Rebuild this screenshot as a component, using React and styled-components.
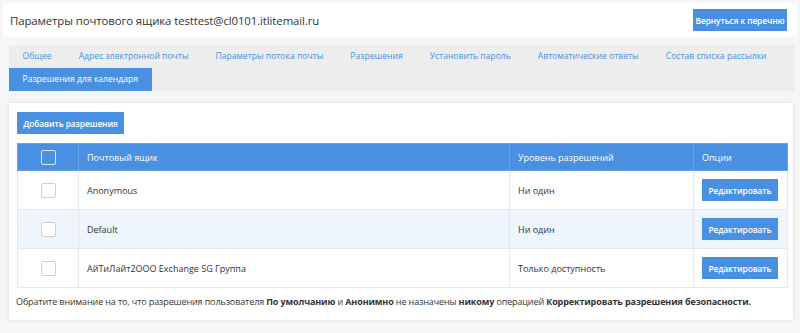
import React from 'react';
import styled, { createGlobalStyle } from 'styled-components';

const GlobalStyle = createGlobalStyle`
  html, body {
    margin: 0;
    padding: 0;
    background: #f6f6f6;
    font-family: 'Open Sans', 'Liberation Sans', sans-serif;
    color: #333;
  }
`;

const Page = styled.div`
  width: 800px;
  height: 333px;
  padding: 3px 3px 0 3px;
  box-sizing: border-box;
  overflow: hidden;
`;

const Header = styled.div`
  display: flex;
  align-items: center;
  justify-content: space-between;
  height: 34px;
  background: #fff;
  padding: 0 10px 0 7px;
`;

const Title = styled.h1`
  margin: 0;
  font-size: 11.4px;
  font-weight: 400;
  letter-spacing: -0.1px;
  color: #333;
`;

const BlueButton = styled.button`
  display: block;
  border: none;
  border-radius: 0;
  background: #4a90e2;
  color: #fff;
  font-family: inherit;
  font-size: 8.4px;
  font-weight: 600;
  letter-spacing: -0.1px;
  height: 22px;
  width: ${(p) => p.$w};
  padding: 0;
  cursor: pointer;
`;

const Tabs = styled.div`
  display: flex;
  flex-wrap: wrap;
  margin: 8px 3px 0 6px;
  background: #ededed;
`;

const Tab = styled.div`
  height: 23px;
  line-height: 23px;
  padding: 0 13.5px;
  font-size: 8.6px;
  white-space: nowrap;
  color: ${(p) => (p.$active ? '#fff' : '#4a90e2')};
  background: ${(p) => (p.$active ? '#4a90e2' : 'transparent')};
  cursor: pointer;
`;

const Card = styled.div`
  margin: 12px 4px 0 6px;
  background: #fff;
  padding: 9px 6px 12px 8px;
  box-shadow: 0 0 4px rgba(0, 0, 0, 0.12);
`;

const Table = styled.table`
  margin-top: 9px;
  width: 770px;
  table-layout: fixed;
  border-collapse: collapse;
  font-size: 9px;
`;

const HeadCell = styled.th`
  background: #4a90e2;
  color: #fff;
  font-weight: 400;
  text-align: ${(p) => (p.$center ? 'center' : 'left')};
  height: 26px;
  padding: 0 8px;
  border: 1px solid #6aa5ea;
`;

const Row = styled.tr`
  background: ${(p) => (p.$alt ? '#eef5fc' : '#fff')};
`;

const Cell = styled.td`
  height: 38px;
  padding: 0 8px;
  border: 1px solid #e8e8e8;
  text-align: ${(p) => (p.$center ? 'center' : 'left')};
  vertical-align: middle;
`;

const Check = styled.span`
  display: inline-block;
  width: 13px;
  height: 13px;
  border: 1px solid ${(p) => (p.$head ? '#d7e6f8' : '#d0d0d0')};
  border-radius: 2px;
  background: ${(p) => (p.$head ? '#4a90e2' : '#fff')};
  vertical-align: middle;
`;

const Note = styled.p`
  margin: 7px 0 0 -1px;
  font-size: 9px;
  letter-spacing: -0.12px;
  color: #333;

  b {
    font-weight: 700;
  }
`;

const tabs = [
  'Общее',
  'Адрес электронной почты',
  'Параметры потока почты',
  'Разрешения',
  'Установить пароль',
  'Автоматические ответы',
  'Состав списка рассылки',
  'Разрешения для календаря'
];

const rows = [
  { name: 'Anonymous', level: 'Ни один' },
  { name: 'Default', level: 'Ни один' },
  { name: 'АйТиЛайт2OOO Exchange SG Группа', level: 'Только доступность' }
];

const App = () => {
  return (
    <Page>
      <GlobalStyle />
      <Header>
        <Title>Параметры почтового ящика testtest@cl0101.itlitemail.ru</Title>
        <BlueButton $w="94px">Вернуться к перечню</BlueButton>
      </Header>

      <Tabs>
        {tabs.map((t, i) => (
          <Tab key={t} $active={i === tabs.length - 1}>
            {t}
          </Tab>
        ))}
      </Tabs>

      <Card>
        <BlueButton $w="107px">Добавить разрешения</BlueButton>
        <Table>
          <colgroup>
            <col style={{ width: 61 }} />
            <col style={{ width: 431 }} />
            <col style={{ width: 184 }} />
            <col style={{ width: 94 }} />
          </colgroup>
          <thead>
            <tr>
              <HeadCell $center>
                <Check $head />
              </HeadCell>
              <HeadCell>Почтовый ящик</HeadCell>
              <HeadCell>Уровень разрешений</HeadCell>
              <HeadCell>Опции</HeadCell>
            </tr>
          </thead>
          <tbody>
            {rows.map((r, i) => (
              <Row key={r.name} $alt={i === 1}>
                <Cell $center>
                  <Check />
                </Cell>
                <Cell>{r.name}</Cell>
                <Cell>{r.level}</Cell>
                <Cell>
                  <BlueButton $w="76px">Редактировать</BlueButton>
                </Cell>
              </Row>
            ))}
          </tbody>
        </Table>
        <Note>
          Обратите внимание на то, что разрешения пользователя <b>По умолчанию</b> и{' '}
          <b>Анонимно</b> не назначены <b>никому</b> операцией{' '}
          <b>Корректировать разрешения безопасности.</b>
        </Note>
      </Card>
    </Page>
  );
};

export default App;
